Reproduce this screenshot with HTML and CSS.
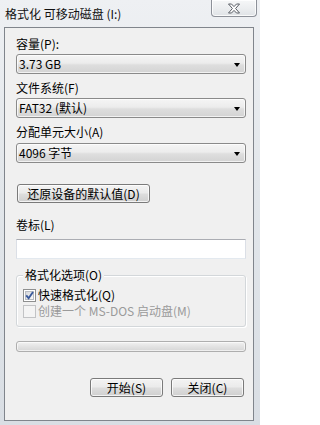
FILE: index.html
```html
<!DOCTYPE html>
<html lang="zh-CN">
<head>
<meta charset="utf-8">
<title>格式化 可移动磁盘 (I:)</title>
<link rel="stylesheet" href="styles.css">
</head>
<body>
<div class="window">
  <div class="titlebar">
    <span class="title">格式化 可移动磁盘 (I:)</span>
    <div class="close-btn">
      <svg width="14" height="11" viewBox="0 0 14 11">
        <path d="M1.5 1 L4.5 1 L7 3.6 L9.5 1 L12.5 1 L8.6 5.5 L12.5 10 L9.5 10 L7 7.4 L4.5 10 L1.5 10 L5.4 5.5 Z" fill="#fdfdfd" stroke="#5a5e66" stroke-width="1" stroke-linejoin="round"/>
      </svg>
    </div>
  </div>
  <div class="client">
    <div class="label l-first">容量(P):</div>
    <div class="combo"><span>3.73 GB</span><span class="arrow"></span></div>
    <div class="label l-next">文件系统(F)</div>
    <div class="combo"><span>FAT32 (默认)</span><span class="arrow"></span></div>
    <div class="label l-next">分配单元大小(A)</div>
    <div class="combo c-third"><span>4096 字节</span><span class="arrow"></span></div>
    <div class="btn btn-restore">还原设备的默认值(D)</div>
    <div class="label l-volume">卷标(L)</div>
    <div class="textbox"></div>
    <div class="group">
      <div class="legend">格式化选项(O)</div>
      <div class="check-row cr-first">
        <svg class="cb" width="13" height="13" viewBox="0 0 13 13">
          <defs>
            <linearGradient id="cbg" x1="0" y1="0" x2="1" y2="1">
              <stop offset="0" stop-color="#d4d6da"/>
              <stop offset="1" stop-color="#fbfbfb"/>
            </linearGradient>
          </defs>
          <rect x="0.5" y="0.5" width="12" height="12" fill="#fff" stroke="#8e8f8f"/>
          <rect x="2.5" y="2.5" width="8" height="8" fill="url(#cbg)" stroke="#b8bcc2"/>
          <path d="M3.2 6.4 L5.6 9.2 L10 3" fill="none" stroke="#3a5a9c" stroke-width="1.9"/>
        </svg>
        <span>快速格式化(Q)</span>
      </div>
      <div class="check-row disabled">
        <svg class="cb" width="13" height="13" viewBox="0 0 13 13">
          <rect x="0.5" y="0.5" width="12" height="12" fill="#f4f4f4" stroke="#c2c3c5"/>
        </svg>
        <span>创建一个 MS-DOS 启动盘(M)</span>
      </div>
    </div>
    <div class="progress"></div>
    <div class="actions">
      <div class="btn btn-action">开始(S)</div>
      <div class="btn btn-action">关闭(C)</div>
    </div>
  </div>
</div>
</body>
</html>
```

FILE: styles.css
```css
html, body {
  margin: 0;
  padding: 0;
}

body {
  width: 260px;
  height: 425px;
  overflow: hidden;
  font-family: "Noto Sans CJK SC", "Noto Sans", sans-serif;
  font-size: 12px;
  color: #000;
}

.window {
  width: 260px;
  height: 425px;
  display: flex;
  flex-direction: column;
  background: linear-gradient(to bottom, #eef0f3 0%, #e3e7eb 40%, #d9dee4 100%);
}

.titlebar {
  height: 27px;
  flex: none;
  display: flex;
  align-items: flex-start;
  padding-left: 5px;
}

.title {
  margin-top: 7px;
  line-height: 14px;
  color: #111;
  white-space: nowrap;
}

.close-btn {
  margin-left: auto;
  margin-right: 3px;
  width: 46px;
  height: 17px;
  box-sizing: border-box;
  border: 1px solid #8d9199;
  border-top: none;
  border-radius: 0 0 4px 4px;
  background: linear-gradient(to bottom, #f6f7f8 0%, #eceef0 50%, #dfe2e6 100%);
  box-shadow: inset 0 0 0 1px rgba(255, 255, 255, 0.8);
  display: flex;
  align-items: center;
  justify-content: center;
}

.close-btn svg {
  display: block;
}

.client {
  flex: none;
  height: 394px;
  margin: 0 6px 0 4px;
  box-sizing: border-box;
  border: 1px solid #80858c;
  background: #f0f0f0;
  padding: 0 7px 0 11px;
  display: flex;
  flex-direction: column;
}

.label {
  line-height: 14px;
  height: 14px;
  white-space: nowrap;
}

.l-first {
  margin-top: 9px;
}

.l-next {
  margin-top: 7px;
}

.l-volume {
  margin-top: 15px;
}

.combo {
  margin-top: 3px;
  height: 20px;
  box-sizing: border-box;
  border: 1px solid #8a8a8a;
  border-radius: 3px;
  background: linear-gradient(to bottom, #f5f5f5 0%, #ececec 45%, #dedede 55%, #d3d3d3 100%);
  box-shadow: inset 0 0 0 1px rgba(255, 255, 255, 0.7);
  display: flex;
  align-items: center;
  justify-content: space-between;
  padding: 0 5px 0 2px;
  line-height: 14px;
  white-space: nowrap;
}

.c-third {
  margin-top: 4px;
}

.arrow {
  width: 0;
  height: 0;
  border-left: 3.5px solid transparent;
  border-right: 3.5px solid transparent;
  border-top: 4px solid #000;
  margin-top: 1px;
}

.btn {
  height: 19px;
  box-sizing: border-box;
  border: 1px solid #7a7a7a;
  border-radius: 3px;
  background: linear-gradient(to bottom, #f3f3f3 0%, #ebebeb 45%, #dddddd 55%, #cfcfcf 100%);
  box-shadow: inset 0 0 0 1px rgba(255, 255, 255, 0.75);
  display: flex;
  align-items: center;
  justify-content: center;
  line-height: 14px;
  white-space: nowrap;
}

.btn-restore {
  margin-top: 21px;
  margin-left: 1px;
  width: 133px;
}

.textbox {
  margin-top: 7px;
  height: 20px;
  box-sizing: border-box;
  background: #fff;
  border: 1px solid #dbdfe6;
  border-top-color: #abadb3;
  border-bottom-color: #e3e9ef;
}

.group {
  margin-top: 16px;
  width: 230px;
  height: 52px;
  box-sizing: border-box;
  border: 1px solid #d3d7da;
  border-radius: 3px;
  box-shadow: inset 1px 1px 0 #fff, 1px 1px 0 #fff;
  display: flex;
  flex-direction: column;
}

.legend {
  align-self: flex-start;
  margin-top: -8px;
  margin-left: 6px;
  padding: 0 2px;
  background: #f0f0f0;
  line-height: 14px;
  height: 14px;
  white-space: nowrap;
}

.check-row {
  display: flex;
  align-items: center;
  height: 14px;
  line-height: 14px;
  margin-top: 2px;
  padding-left: 6px;
  white-space: nowrap;
}

.cr-first {
  margin-top: 6px;
}

.cb {
  display: block;
  flex: none;
  margin-right: 2px;
}

.disabled {
  color: #9a9a9a;
}

.progress {
  margin-top: 14px;
  width: 230px;
  height: 11px;
  box-sizing: border-box;
  border: 1px solid #aeaeae;
  border-radius: 3px;
  background: linear-gradient(to bottom, #f2f2f2 0%, #e3e3e3 50%, #d6d6d6 100%);
  box-shadow: inset 0 0 0 1px rgba(255, 255, 255, 0.6);
}

.actions {
  margin-top: 26px;
  display: flex;
  justify-content: flex-end;
  gap: 8px;
  padding-right: 2px;
}

.btn-action {
  width: 73px;
}
```
